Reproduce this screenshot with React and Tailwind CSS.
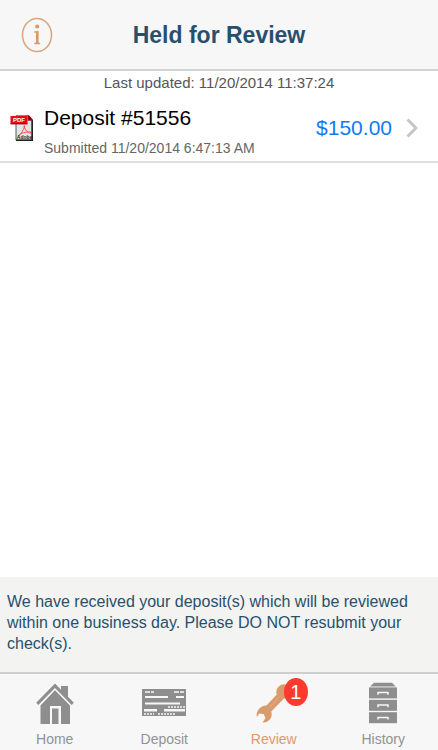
import React from "react";

function InfoIcon() {
  return (
    <svg className="w-8 h-9" viewBox="0 0 32 36" fill="none" aria-hidden="true">
      <ellipse cx="16" cy="18" rx="14.5" ry="16.6" stroke="#dca47c" strokeWidth="1.5" />
      <circle cx="16.2" cy="9.5" r="2.1" fill="#d99a6c" />
      <path
        d="M13 14.6L17.6 13.8V25.6L19.2 26V27.2H13.2V26L15 25.6V15.8L13 15.6Z"
        fill="#d99a6c"
      />
    </svg>
  );
}

function PdfIcon() {
  return (
    <svg className="w-6 h-7 shrink-0" viewBox="0 0 24 28" aria-hidden="true">
      <path d="M6 1.8H18.5L22.2 6V26.2H6Z" fill="#e3e4e6" stroke="#55575a" strokeWidth="1" />
      <path d="M22.2 6V26.2H6" fill="none" stroke="#222222" strokeWidth="1.6" />
      <path d="M17.5 1.3H19L22.8 5.5V6.8H17.5Z" fill="#a51414" />
      <path d="M19 2V5.6H22Z" fill="#4a1616" />
      <rect x="0.5" y="2" width="17" height="8.2" fill="#e30d12" />
      <path d="M0.5 9.8H17.5" stroke="#8e0a0c" strokeWidth="0.9" />
      <text x="3" y="8.3" fontSize="6" fontWeight="700" fill="#ffffff">
        PDF
      </text>
      <path
        d="M14.4 11.5C13.3 12 15.2 15.5 17 17.4C18.8 19.2 21.2 19.5 21 18.5C20.8 17.4 14 18 10.5 19.8C8 21.3 8.6 22.3 10 20.8C12 18.6 15.2 12.5 14.4 11.5Z"
        fill="none"
        stroke="#e8554f"
        strokeWidth="1"
      />
      <text x="6.8" y="25" fontSize="5" fontWeight="700" fill="#2b2b2b">
        Adobe
      </text>
    </svg>
  );
}

function HomeIcon() {
  return (
    <svg className="w-10 h-11" viewBox="0 0 40 44" fill="#8e8e8e" aria-hidden="true">
      <path d="M20 1.5L26 7.7V4H33V14.8L38.8 20.7L36.7 23L20 6L3.3 23L1.2 20.7Z" />
      <path d="M20 8.3L35 23.5V42H26V24H15V42H5.5V23.5Z" />
      <path d="M17 26.5H23.5V42H17Z" />
    </svg>
  );
}

function CheckIcon() {
  return (
    <svg className="w-11 h-11" viewBox="0 0 44 44" aria-hidden="true">
      <rect x="0" y="7" width="44" height="27" fill="#8e8e8e" />
      <g stroke="#f7f7f7" fill="none">
        <path d="M3 10H12M32 10H42" strokeWidth="1.5" strokeDasharray="5 1" />
        <path d="M3 15H26M34 15H42" strokeWidth="2" />
        <path d="M3 21.5H38" strokeWidth="2" />
        <path d="M26 25H43" strokeWidth="1.6" strokeDasharray="2 1" />
        <path d="M2 28.3H15M22 28.3H43" strokeWidth="2.4" />
        <path d="M2 32H12M16 32H33" strokeWidth="1.5" strokeDasharray="2 1" />
      </g>
    </svg>
  );
}

function WrenchIcon() {
  return (
    <svg className="w-11 h-11" viewBox="0 0 44 44" aria-hidden="true">
      <path
        d="M14.5 23.5L24.8 12.5C23.2 8 26 3 31.5 2.2L37 3.2L33.8 7.4L36 11L40 11L42 8C42 13 37.5 17.5 32 16.6L19.2 29.5C20.8 34 18.5 38.6 13.5 40.2L10.5 40.4L13.5 36L11.6 32L7.2 31.5L5 35C3.5 29.5 8 23.5 14.5 23.5Z"
        fill="#d99a6c"
      />
      <path d="M16.4 26.6L27.6 14.6" stroke="#e3b08b" strokeWidth="1" />
    </svg>
  );
}

function CabinetIcon() {
  return (
    <svg className="w-7 h-11" viewBox="0 0 28 44" aria-hidden="true">
      <g fill="#8e8e8e">
        <path d="M5 0.8H23L26.8 4.4H1.2Z" />
        <rect y="5.4" width="28" height="11" />
        <rect y="17.8" width="28" height="11" />
        <rect y="30.2" width="28" height="11" />
      </g>
      <path
        d="M9 12.8V10.6H19V12.8M9 25.2V23H19V25.2M9 37.6V35.4H19V37.6"
        fill="none"
        stroke="#f7f7f7"
        strokeWidth="1.5"
      />
    </svg>
  );
}

const tabs = [
  { label: "Home", icon: HomeIcon },
  { label: "Deposit", icon: CheckIcon },
  { label: "Review", icon: WrenchIcon, badge: 1, active: true },
  { label: "History", icon: CabinetIcon },
];

export default function App() {
  return (
    <div className="min-h-screen flex flex-col bg-white font-['Liberation_Sans',Arial,sans-serif]">
      {/* Header */}
      <header className="grid grid-cols-[1fr_auto_1fr] items-center h-[71px] px-[21px] bg-[#f7f7f7] border-b-2 border-[#d2d2d2]">
        <button type="button" aria-label="Information" className="justify-self-start">
          <InfoIcon />
        </button>
        <h1 className="text-[23px] leading-7 font-bold text-[#28506c]">Held for Review</h1>
      </header>

      {/* Deposits */}
      <main className="flex-grow">
        <p className="text-center text-[15px] leading-6 text-[#555555]">
          Last updated: 11/20/2014 11:37:24
        </p>
        <ul>
          <li className="border-b-2 border-[#dedede]">
            <a href="#deposit-51556" className="flex items-center h-[66px] pl-[10px] pr-5">
              <PdfIcon />
              <div className="flex-grow pt-2 pl-[10px]">
                <h2 className="text-[21px] leading-8 text-black">Deposit #51556</h2>
                <p className="text-sm leading-7 text-[#666666]">
                  Submitted 11/20/2014 6:47:13 AM
                </p>
              </div>
              <span className="text-[21px] leading-8 text-[#0f7bf2]">$150.00</span>
              <svg className="w-3 h-5 ml-[14px]" viewBox="0 0 12 20" fill="none" aria-hidden="true">
                <path d="M1.5 1.5L10 10L1.5 18.5" stroke="#c5c5c8" strokeWidth="3" />
              </svg>
            </a>
          </li>
        </ul>
      </main>

      {/* Notice */}
      <p className="px-[7px] pt-[14px] pb-[18px] text-base leading-[21px] text-[#28506c] bg-[#f3f3f2]">
        We have received your deposit(s) which will be reviewed within one
        business day. Please DO NOT resubmit your check(s).
      </p>

      {/* Tab bar */}
      <nav className="grid grid-cols-4 h-[78px] pt-2 bg-[#f7f7f7] border-t-2 border-[#cfcfcf]">
        {tabs.map(({ label, icon: Icon, badge, active }) => (
          <a
            key={label}
            href={`#${label.toLowerCase()}`}
            className={`flex flex-col items-center text-sm leading-5 ${
              active ? "text-[#d99a6c]" : "text-[#929292]"
            }`}
          >
            <span className="relative">
              <Icon />
              {badge && (
                <span className="absolute -top-1 -right-3 w-6 h-7 rounded-[50%] bg-[#fc3a2f] text-white text-xl leading-7 text-center">
                  {badge}
                </span>
              )}
            </span>
            <span className="pt-[3px]">{label}</span>
          </a>
        ))}
      </nav>
    </div>
  );
}
